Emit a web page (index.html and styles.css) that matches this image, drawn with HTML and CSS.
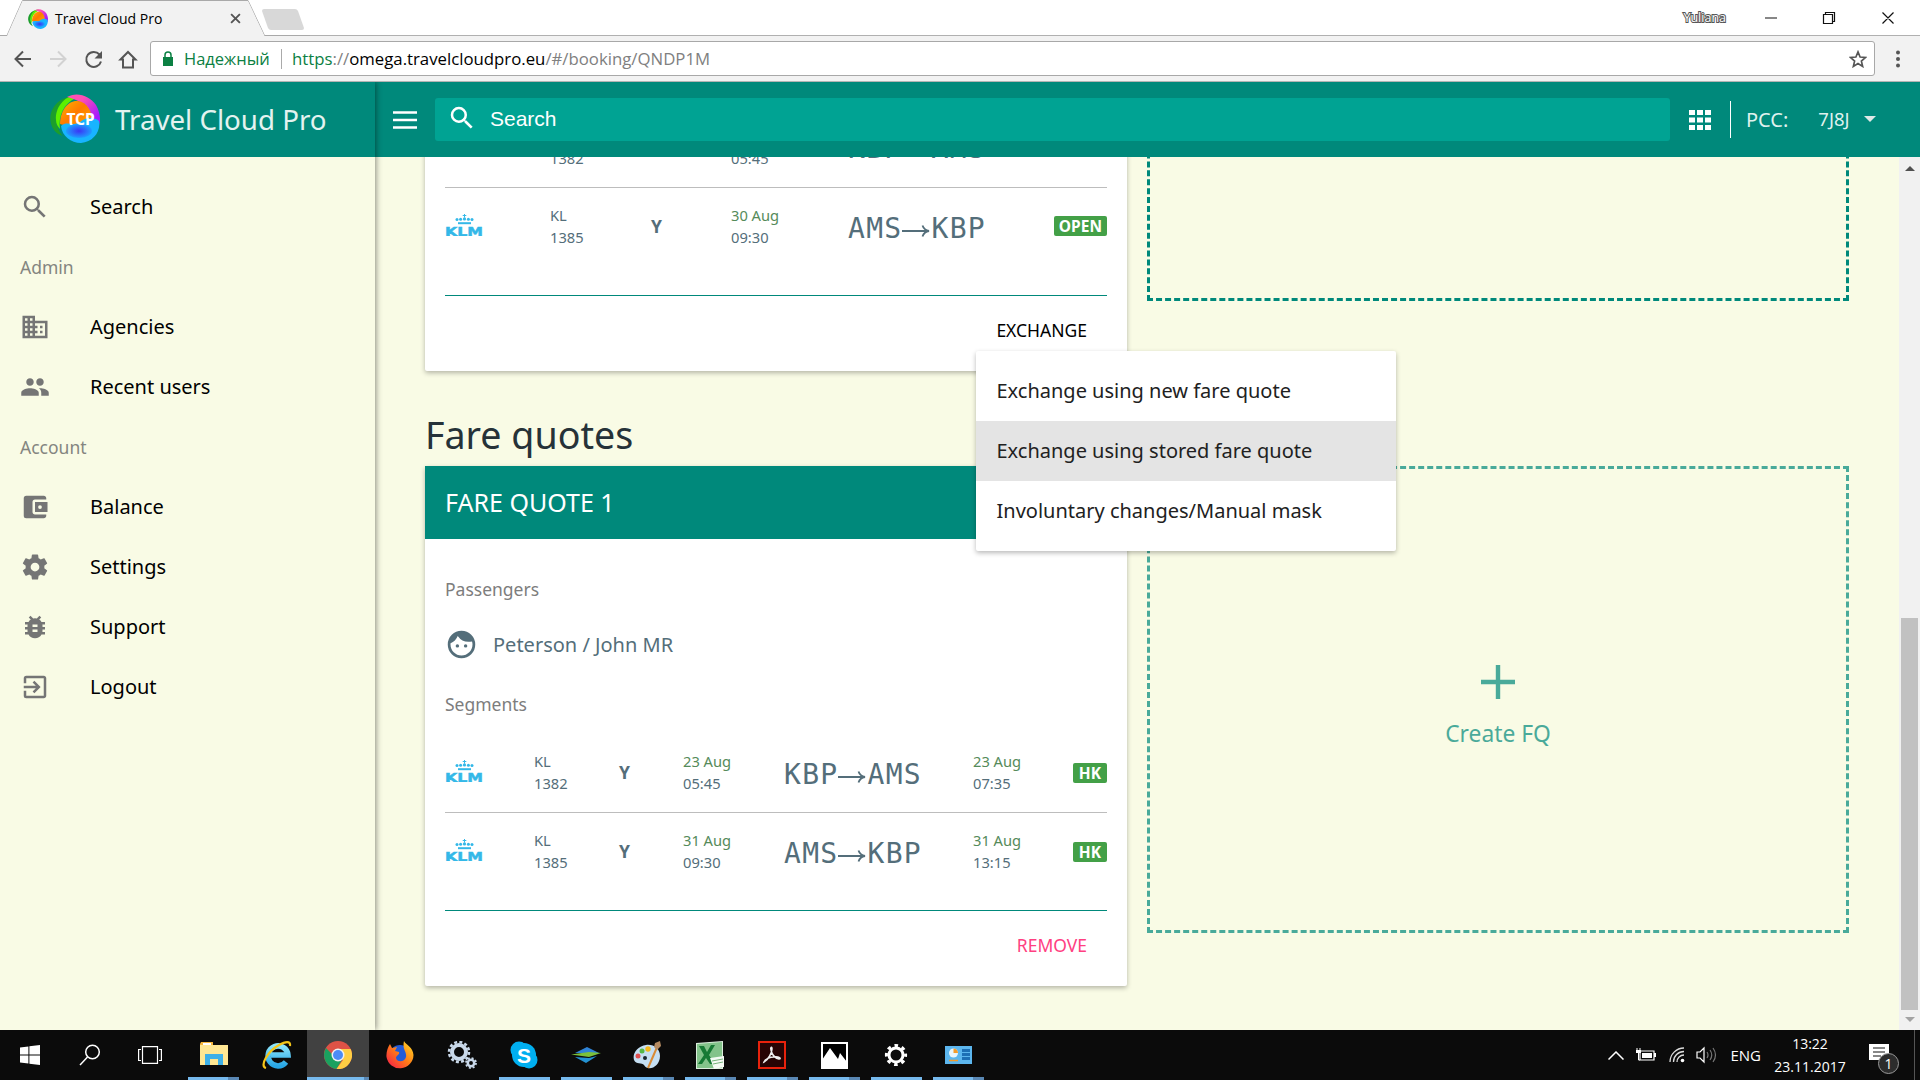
FILE: index.html
```html
<!DOCTYPE html>
<html lang="en">
<head>
<meta charset="utf-8">
<title>Travel Cloud Pro</title>
<link rel="stylesheet" href="styles.css">
</head>
<body>
<svg class="defs" aria-hidden="true">
  <defs>
    <linearGradient id="g-pink" x1="0" y1="0" x2="1" y2="1"><stop offset=".3" stop-color="#ff4fb4"/><stop offset=".8" stop-color="#a31aff"/></linearGradient>
    <linearGradient id="g-orange" x1="0" y1="0" x2="1" y2="1"><stop offset="0" stop-color="#ffb300"/><stop offset=".45" stop-color="#ff7a00"/><stop offset="1" stop-color="#ffb300"/></linearGradient>
    <radialGradient id="g-blue"><stop offset="0" stop-color="#3b35f5"/><stop offset="1" stop-color="#1f9dff"/></radialGradient>
    <linearGradient id="g-ie" x1="0" y1="0" x2="0" y2="1"><stop offset="0" stop-color="#8be4fb"/><stop offset="1" stop-color="#28a7e6"/></linearGradient>
    <linearGradient id="g-fox" x1="1" y1="0" x2="0" y2="1"><stop offset="0" stop-color="#ffe226"/><stop offset=".5" stop-color="#ff7a18"/><stop offset="1" stop-color="#f5134e"/></linearGradient>
    <symbol id="globe" viewBox="0 0 50 49" preserveAspectRatio="none">
      <path d="M20 3C8 4-1 16 .5 27c1 8 6 13 12 15C4 32 4 14 20 5z" fill="#1c9e2c"/>
      <path d="M26 1C14 2 5 14 6 26c0 4 2 7 4 9C8 22 14 9 26 4z" fill="#5df000"/>
      <path d="M17 3C27-3 40 2 46 11c4 7 5 15 3 20-2 4-8 2-9 0C42 20 36 7 17 3z" fill="url(#g-pink)"/>
      <path d="M10 30C10 17 18 6 28 7c9 1 14 10 14 20L30 36z" fill="url(#g-orange)"/>
      <path d="M11 32c6-6 12 1 19-4 5-4 13-6 19-1 2 11-6 21-18 22-10 0-19-7-20-17z" fill="#18b4ff"/>
      <ellipse cx="29" cy="37" rx="13" ry="7" fill="url(#g-blue)"/>
    </symbol>
    <symbol id="search" viewBox="0 0 24 24"><path d="M15.5 14h-.79l-.28-.27A6.47 6.47 0 0 0 16 9.5 6.5 6.5 0 1 0 9.5 16c1.61 0 3.09-.59 4.23-1.57l.27.28v.79l5 4.99L20.49 19zm-6 0a4.5 4.5 0 1 1 0-9 4.5 4.5 0 0 1 0 9z"/></symbol>
    <symbol id="klm" viewBox="0 0 38 22">
      <path d="M13 8.200h13v2H13z"/><circle cx="12" cy="5.400" r="1.500"/><circle cx="15.600" cy="5.200" r="1.500"/><circle cx="19.500" cy="4.900" r="1.600"/><circle cx="23.400" cy="5.200" r="1.500"/><circle cx="27" cy="5.400" r="1.500"/><path d="M19 0h1v1h1.300v1H20v1.500h-1V2h-1.300V1H19z"/>
      <text x="0" y="21.500" class="klm-word" textLength="38" lengthAdjust="spacingAndGlyphs">KLM</text>
    </symbol>
    <symbol id="arrow" viewBox="0 0 28 14"><path d="M0 7h27M20.500 1.500c1 3 3.500 5 6.500 5.500-3 .5-5.500 2.500-6.500 5.500" fill="none" stroke="#546e7a" stroke-width="1.800"/></symbol>
  </defs>
</svg>

<header class="browser">
  <div class="tabstrip">
    <svg class="tabs" width="310" height="36" viewBox="0 0 310 36"><path d="M0 35.500H7L22.500.500H248L264.500 35.500H310" fill="none" stroke="#a9a9a9"/><path d="M7 36 22.500 1H248L264.500 36z" fill="#f2f2f2"/><path d="M264 9h31q2 0 3 2l6 17q0 2-2 2h-31q-2 0-3-2l-6-17q0-2 2-2z" fill="#d8d8d8"/></svg>
    <div class="tab-label"><svg class="favicon"><use href="#globe"/></svg><span>Travel Cloud Pro</span>
      <svg class="tab-close" viewBox="0 0 10 10"><path d="M1 1l8 8M9 1 1 9" stroke="#555" stroke-width="1.700"/></svg></div>
    <span class="profile">Yuliana</span>
    <svg class="win-buttons" width="130" height="14" viewBox="0 0 130 14" fill="none" stroke="#111" stroke-width="1.200"><path d="M0 7h12M58.500 3.500h9v9h-9zM60.500 3V1.500h9v9H68M117.500 1.500l11 11M128.500 1.500l-11 11"/></svg>
  </div>
  <div class="toolbar">
    <svg class="nav" width="130" height="24" viewBox="0 0 130 24" fill="none" stroke="#555" stroke-width="2"><path d="M31 12H16M23 4.500 15.500 12l7.500 7.500"/><path d="M50 12h15M58 4.500l7.500 7.500-7.500 7.500" stroke="#d2d2d2"/><path d="M99.500 7.500A7.500 7.500 0 1 0 101 14.500"/><path d="M102 4v7.500h-7.500z" fill="#555" stroke="none"/><path d="M120.500 12.500 128 5l7.500 7.500H133V20.500H123V12.500z"/></svg>
    <div class="omnibox">
      <svg width="12" height="16" viewBox="0 0 12 16"><path d="M1 6h10v9H1z" fill="#0b8043"/><path d="M3 6V4a3 3 0 0 1 6 0v2" fill="none" stroke="#0b8043" stroke-width="1.500"/></svg>
      <span class="secure">Надежный</span>
      <span class="url"><b>https</b>://<i>omega.travelcloudpro.eu</i>/#/booking/QNDP1M</span>
      <svg class="star" width="18" height="18" viewBox="0 0 24 24"><path d="M12 2.500l2.800 6.800 7.200.600-5.500 4.800 1.700 7.200-6.200-3.900-6.200 3.900 1.700-7.200L2 9.900l7.200-.600z" fill="none" stroke="#555" stroke-width="2.200"/></svg>
    </div>
    <svg class="kebab" width="4" height="18" viewBox="0 0 4 18" fill="#555"><circle cx="2" cy="2.500" r="2"/><circle cx="2" cy="9" r="2"/><circle cx="2" cy="15.500" r="2"/></svg>
  </div>
</header>

<div class="app">
  <aside class="sidebar">
    <div class="brand"><svg class="logo" viewBox="0 0 50 49"><use href="#globe" width="50" height="49"/><text x="30.500" y="30.500" text-anchor="middle" class="logo-text">TCP</text></svg><span class="brand-name">Travel Cloud Pro</span></div>
    <nav class="menu">
      <a class="item"><svg class="ico"><use href="#search"/></svg><span>Search</span></a>
      <h6 class="group">Admin</h6>
      <a class="item"><svg class="ico" viewBox="0 0 24 24"><path d="M12 7V3H2v18h20V7H12zM6 19H4v-2h2v2zm0-4H4v-2h2v2zm0-4H4V9h2v2zm0-4H4V5h2v2zm4 12H8v-2h2v2zm0-4H8v-2h2v2zm0-4H8V9h2v2zm0-4H8V5h2v2zm10 12h-8v-2h2v-2h-2v-2h2v-2h-2V9h8v10zm-2-8h-2v2h2v-2zm0 4h-2v2h2v-2z"/></svg><span>Agencies</span></a>
      <a class="item"><svg class="ico" viewBox="0 0 24 24"><path d="M16 11c1.660 0 2.990-1.340 2.990-3S17.660 5 16 5s-3 1.340-3 3 1.340 3 3 3zm-8 0c1.660 0 2.990-1.340 2.990-3S9.660 5 8 5 5 6.340 5 8s1.340 3 3 3zm0 2c-2.330 0-7 1.170-7 3.500V19h14v-2.500c0-2.330-4.670-3.500-7-3.500zm8 0c-.290 0-.620.020-.970.050 1.160.840 1.970 1.970 1.970 3.450V19h6v-2.500c0-2.330-4.670-3.500-7-3.500z"/></svg><span>Recent users</span></a>
      <h6 class="group">Account</h6>
      <a class="item"><svg class="ico" viewBox="0 0 24 24"><path d="M21 18v1c0 1.100-.9 2-2 2H5a2 2 0 0 1-2-2V5a2 2 0 0 1 2-2h14c1.100 0 2 .9 2 2v1h-9a2 2 0 0 0-2 2v8c0 1.100.890 2 2 2h9zm-9-2h10V8H12v8zm4-2.500a1.500 1.500 0 1 1 0-3 1.500 1.500 0 0 1 0 3z"/></svg><span>Balance</span></a>
      <a class="item"><svg class="ico" viewBox="0 0 24 24"><path d="M19.430 12.980c.040-.320.070-.640.070-.980s-.030-.660-.070-.980l2.110-1.650c.190-.150.240-.420.120-.640l-2-3.460c-.120-.220-.390-.300-.610-.220l-2.490 1c-.520-.400-1.080-.730-1.690-.980l-.380-2.650C14.460 2.180 14.250 2 14 2h-4c-.250 0-.460.180-.490.420l-.380 2.650c-.610.250-1.170.590-1.690.980l-2.490-1c-.230-.090-.490 0-.610.220l-2 3.460c-.130.220-.070.490.120.640l2.110 1.650c-.040.320-.070.650-.070.980s.030.660.070.980l-2.110 1.650c-.190.150-.240.420-.120.640l2 3.460c.120.220.390.300.610.220l2.490-1c.520.400 1.080.730 1.690.980l.380 2.650c.030.240.240.420.490.420h4c.250 0 .460-.180.490-.420l.380-2.650c.610-.250 1.170-.590 1.690-.980l2.490 1c.230.090.490 0 .610-.220l2-3.460c.120-.220.070-.490-.120-.640l-2.110-1.650zM12 15.500a3.500 3.500 0 1 1 0-7 3.500 3.500 0 0 1 0 7z"/></svg><span>Settings</span></a>
      <a class="item"><svg class="ico" viewBox="0 0 24 24"><path d="M20 8h-2.810a5.985 5.985 0 0 0-1.820-1.960L17 4.410 15.590 3l-2.170 2.170a6.002 6.002 0 0 0-2.830 0L8.410 3 7 4.410l1.620 1.630C7.880 6.550 7.260 7.220 6.810 8H4v2h2.090c-.050.330-.090.660-.090 1v1H4v2h2v1c0 .340.040.670.090 1H4v2h2.810a5.990 5.990 0 0 0 10.380 0H20v-2h-2.090c.050-.330.090-.660.090-1v-1h2v-2h-2v-1c0-.340-.040-.670-.090-1H20V8zm-6 8h-4v-2h4v2zm0-4h-4v-2h4v2z"/></svg><span>Support</span></a>
      <a class="item"><svg class="ico" viewBox="0 0 24 24"><path d="M10.090 15.590L11.500 17l5-5-5-5-1.410 1.410L12.670 11H3v2h9.670l-2.580 2.590zM19 3H5a2 2 0 0 0-2 2v4h2V5h14v14H5v-4H3v4a2 2 0 0 0 2 2h14c1.100 0 2-.9 2-2V5c0-1.100-.9-2-2-2z"/></svg><span>Logout</span></a>
    </nav>
  </aside>

  <div class="content">
    <div class="topbar">
      <svg class="burger" width="24" height="18" viewBox="0 0 24 18"><path d="M0 1.500h24M0 9h24M0 16.500h24" stroke="#fff" stroke-width="2.600"/></svg>
      <div class="searchbox"><svg class="ico-w"><use href="#search"/></svg><span>Search</span></div>
      <svg class="apps" width="22" height="20" viewBox="0 0 22 20" fill="#fff"><path d="M0 0h6v5H0zM8 0h6v5H8zM16 0h6v5h-6zM0 7.500h6v5H0zM8 7.500h6v5H8zM16 7.500h6v5h-6zM0 15h6v5H0zM8 15h6v5H8zM16 15h6v5h-6z"/></svg>
      <div class="pcc"><span>PCC:</span><span class="code">7J8J</span><i class="caret"></i></div>
    </div>
    <div class="viewport">
      <main class="page">
        <section class="row tickets">
          <div class="card">
            <div class="segment wide">
              <svg class="klm"><use href="#klm"/></svg><div class="pair">KL<br>1382</div><b class="cls">Y</b><div class="pair"><em>23 Aug</em><br>05:45</div><div class="route">KBP<svg class="arrow"><use href="#arrow"/></svg>AMS</div><span class="badge">OPEN</span>
            </div>
            <div class="segment wide last">
              <svg class="klm"><use href="#klm"/></svg><div class="pair">KL<br>1385</div><b class="cls">Y</b><div class="pair"><em>30 Aug</em><br>09:30</div><div class="route">AMS<svg class="arrow"><use href="#arrow"/></svg>KBP</div><span class="badge">OPEN</span>
            </div>
            <div class="actions"><span class="exchange">EXCHANGE</span></div>
            <ul class="dropdown"><li>Exchange using new fare quote</li><li class="hover">Exchange using stored fare quote</li><li>Involuntary changes/Manual mask</li></ul>
          </div>
          <div class="dropzone"></div>
        </section>
        <h2 class="heading">Fare quotes</h2>
        <section class="row quotes">
          <div class="card">
            <div class="card-head">FARE QUOTE 1</div>
            <div class="label">Passengers</div>
            <div class="passenger"><svg viewBox="0 0 24 24"><path d="M9 11.750a1.250 1.250 0 1 0 0 2.500 1.250 1.250 0 0 0 0-2.500zm6 0a1.250 1.250 0 1 0 0 2.500 1.250 1.250 0 0 0 0-2.500zM12 2a10 10 0 1 0 0 20 10 10 0 0 0 0-20zm0 18c-4.410 0-8-3.590-8-8 0-.290.020-.580.050-.860 2.360-1.050 4.230-2.980 5.210-5.370a9.974 9.974 0 0 0 10.410 3.970c.210.710.330 1.470.330 2.260 0 4.410-3.590 8-8 8z"/></svg><span>Peterson / John MR</span></div>
            <div class="label seg">Segments</div>
            <div class="segment">
              <svg class="klm"><use href="#klm"/></svg><div class="pair">KL<br>1382</div><b class="cls">Y</b><div class="pair"><em>23 Aug</em><br>05:45</div><div class="route">KBP<svg class="arrow"><use href="#arrow"/></svg>AMS</div><div class="pair"><em>23 Aug</em><br>07:35</div><span class="badge">HK</span>
            </div>
            <div class="segment last">
              <svg class="klm"><use href="#klm"/></svg><div class="pair">KL<br>1385</div><b class="cls">Y</b><div class="pair"><em>31 Aug</em><br>09:30</div><div class="route">AMS<svg class="arrow"><use href="#arrow"/></svg>KBP</div><div class="pair"><em>31 Aug</em><br>13:15</div><span class="badge">HK</span>
            </div>
            <div class="actions"><span class="remove">REMOVE</span></div>
          </div>
          <div class="dropzone create"><svg width="34" height="34" viewBox="0 0 34 34"><path d="M0 17h34M17 0v34" stroke="#00897b" stroke-width="4.400"/></svg><span>Create FQ</span></div>
        </section>
      </main>
      <div class="scrollbar"><i class="up"></i><i class="thumb"></i><i class="down"></i></div>
    </div>
  </div>
</div>

<footer class="taskbar">
  <div class="tasks">
    <div class="task start"><svg width="20" height="20" viewBox="0 0 20 20" fill="#fff"><path d="M0 2.600 8.400 1.500V9.500H0zM9.400 1.300 20 0V9.500H9.400zM0 10.500h8.400v8L0 17.400zM9.400 10.500H20V20L9.400 18.700z"/></svg></div>
    <div class="task find"><svg width="22" height="22" viewBox="0 0 22 22" fill="none" stroke="#fff" stroke-width="1.500"><circle cx="13.500" cy="8" r="6.800"/><path d="M8.500 13 1 21"/></svg></div>
    <div class="task view"><svg width="24" height="18" viewBox="0 0 24 18" fill="none" stroke="#fff" stroke-width="1.200"><path d="M4.500.600h15v16.800h-15zM3 3.500H.600v11H3M21 3.500h2.400v11H21"/></svg></div>
    <div class="task on many"><svg width="28" height="26" viewBox="0 0 28 26"><path d="M0 2h3V0h10v3h15v20H0z" fill="#ffe793"/><path d="M1 0h12v3H0V2z" fill="#f6b73c"/><path d="M3 1h8v2H3z" fill="#fff"/><path d="M5 12h18v11h-5v-6h-8v6H5z" fill="#3eb0e8"/></svg></div>
    <div class="task ie"><svg width="30" height="30" viewBox="0 0 30 30" fill="none"><path d="M24 22a10 10 0 1 1 2-7H9" stroke="url(#g-ie)" stroke-width="5.500"/><path d="M4 28C-3 26 6 11 17 5c6-3.500 12-4.500 11 1" stroke="#f5c518" stroke-width="2.200"/></svg></div>
    <div class="task on active"><svg width="28" height="28" viewBox="0 0 28 28"><circle cx="14" cy="14" r="14" fill="#de5246"/><path d="M2 7a14 14 0 0 0 10.500 21L19 17 14 14H9z" fill="#1aa15f"/><path d="M14 8h12.600A14 14 0 0 1 12.500 28l6.500-9z" fill="#ffce44"/><circle cx="14" cy="14" r="6.500" fill="#f1f1f1"/><circle cx="14" cy="14" r="5" fill="#4c8bf5"/></svg></div>
    <div class="task fox"><svg width="28" height="28" viewBox="0 0 28 28"><circle cx="14" cy="15" r="11" fill="#235bd8"/><path d="M18 0c2 4 9 6 9.500 14A13.600 13.600 0 0 1 .500 16C0 11 2 6 4 3l2 4 5-1-2 4 4 1c1 3-3 3-3 6 1 5 9 4 10-1 1-6-4-7-2-16z" fill="url(#g-fox)"/></svg></div>
    <div class="task gears"><svg width="30" height="28" viewBox="0 0 30 28" fill="none" stroke="#c9d9ea"><circle cx="12" cy="11" r="7" stroke-width="4"/><circle cx="12" cy="11" r="10" stroke-width="2.500" stroke-dasharray="3 2.240"/><circle cx="24" cy="22" r="3.200" stroke-width="2.500"/><circle cx="24" cy="22" r="5" stroke-width="1.800" stroke-dasharray="2 1.930"/></svg></div>
    <div class="task on"><svg width="28" height="28" viewBox="0 0 28 28"><circle cx="9" cy="9" r="8.500" fill="#00aff0"/><circle cx="19" cy="19" r="8.500" fill="#00aff0"/><circle cx="14" cy="14" r="12" fill="#00aff0"/><text x="14" y="21.500" text-anchor="middle" class="skype">S</text></svg></div>
    <div class="task on"><svg width="30" height="16" viewBox="0 0 30 16"><path d="M4 6 16 0l12 6z" fill="#2f83d6"/><path d="M0 7.500 18 5l12 1-12 4z" fill="#7cc13a"/><path d="M4 10l14 1 8-2-11 7z" fill="#2391d2"/></svg></div>
    <div class="task on many"><svg width="30" height="28" viewBox="0 0 30 28"><path d="M13 4C5 5-1 12 1 19c2 5 8 2 10 5 4 7 16 2 16-9C27 8 21 3 13 4z" fill="#c5dff3"/><circle cx="5" cy="15" r="2.500" fill="#e04f4f"/><circle cx="9" cy="10" r="2.500" fill="#55b848"/><circle cx="15" cy="8" r="2.700" fill="#f5b81c"/><circle cx="12" cy="17" r="2" fill="#182630"/><path d="M25 4 15 27" stroke="#d98b36" stroke-width="2"/><path d="M22 2l5-2 1 5-4 4-3-3z" fill="#b58b62"/></svg></div>
    <div class="task on many"><svg width="28" height="28" viewBox="0 0 28 28"><path d="M0 2 27 0v28H0z" fill="#dceedd"/><path d="M1 3l25-2v26H1z" fill="#83c38a"/><path d="M3 5h5l3 6 4-7h4l-6 10 6 9h-5l-4-6-4 6H2l6-9z" fill="#177a35"/><path d="M14 17l14-2v11l-10 2z" fill="#f4fbf4"/><path d="M16 20l11-2M17 23l10-2" stroke="#76b47c"/></svg></div>
    <div class="task on many"><svg width="28" height="28" viewBox="0 0 28 28"><path d="M1 1h26v26H1z" fill="#260404" stroke="#e8220c" stroke-width="2"/><path d="M6 21c4-2 8-9 8-13 0-3-2-2-1 1 1 5 4 8 8 9 3 0 0-3-5-2-4 0-9 2-10 5z" fill="none" stroke="#eee" stroke-width="1.500"/></svg></div>
    <div class="task on many"><svg width="27" height="27" viewBox="0 0 27 27"><path d="M1 1h25v25H1z" fill="#000" stroke="#fff" stroke-width="2"/><path d="M1 18 9 6l8 11 2-6 7 9v6H1z" fill="#fff"/></svg></div>
    <div class="task on"><svg width="24" height="24" viewBox="0 0 24 24" fill="none" stroke="#fff"><circle cx="12" cy="12" r="7" stroke-width="3"/><circle cx="12" cy="12" r="9.600" stroke-width="3" stroke-dasharray="3.600 3.940" stroke-dashoffset="1.800"/></svg></div>
    <div class="task on many"><svg width="27" height="18" viewBox="0 0 27 18"><path d="M0 0h27v18H0z" fill="#5cb6ee"/><circle cx="8.500" cy="7" r="4.500" fill="#e8f5fd"/><path d="M8.500 7V2.500A4.500 4.500 0 0 1 13 7z" fill="#f49b2a"/><path d="M17 3h8v3h-8zM17 7h8v3h-8zM17 11h8v3h-8z" fill="#1d6fb5"/><path d="M4 14.500h9" stroke="#f49b2a" stroke-width="1.500"/></svg></div>
  </div>
  <div class="tray">
    <svg width="16" height="9" viewBox="0 0 16 9"><path d="M.500 8.500 8 1l7.500 7.500" fill="none" stroke="#fff" stroke-width="1.500"/></svg>
    <svg class="battery" width="20" height="14" viewBox="0 0 20 14"><path d="M4 3h14v9H4z" fill="none" stroke="#fff" stroke-width="1.200"/><path d="M6 5h10v5H6zM18 5h2v4h-2zM0 2h5v3H0z" fill="#fff"/><path d="M1 0v2M4 0v2M2.500 5v7H4" stroke="#fff" fill="none"/></svg>
    <svg class="wifi" width="16" height="16" viewBox="0 0 16 16" fill="none" stroke="#ddd" stroke-width="1.300"><path d="M1 15A14 14 0 0 1 15 1M4.500 15A10.500 10.500 0 0 1 15 4.500M8 15a7 7 0 0 1 7-7"/><circle cx="13.500" cy="13.500" r="1.800" fill="#fff" stroke="none"/></svg>
    <svg class="sound" width="21" height="18" viewBox="0 0 21 18" fill="none" stroke="#fff" stroke-width="1.200"><path d="M1 6h3l4-4v14l-4-4H1z"/><path d="M11 6q2 3 0 6M14 4q3.500 5 0 10M17 2q5 7 0 14" stroke="#777"/></svg>
    <span class="lang">ENG</span>
    <div class="clock">13:22<br>23.11.2017</div>
    <div class="notify"><svg width="20" height="20" viewBox="0 0 20 20"><path d="M0 0h20v16h-7l-3 4v-4H0z" fill="#fff"/><path d="M4 4h12M4 8h12M4 12h8" stroke="#111" stroke-width="1.200"/></svg><span class="count">1</span></div>
    <i class="show-desktop"></i>
  </div>
</footer>
</body>
</html>
```
FILE: styles.css
```css
* { box-sizing: border-box; }
body { margin: 0; width: 1920px; height: 1080px; overflow: hidden; display: flex; flex-direction: column; font-family: "Noto Sans", sans-serif; background: #f9fbe5; color: #000; }
svg { display: block; flex: none; }
.defs { position: absolute; width: 0; height: 0; }

/* browser chrome */
.browser { height: 82px; flex: none; background: #f2f2f2; border-bottom: 1px solid #b4b4b4; font-family: "Open Sans", "Noto Sans", sans-serif; }
.tabstrip { height: 36px; display: flex; align-items: center; background: #fff; border-bottom: 1px solid #b0b0b0; position: relative; }
.tabs { position: absolute; left: 0; top: 0; }
.tab-label { position: relative; display: flex; align-items: center; width: 213px; margin-left: 28px; padding-top: 2px; font-size: 14px; }
.tab-label span { margin-left: 7px; flex: 1; }
.favicon { width: 20px; height: 20px; }
.tab-close { width: 11px; height: 11px; }
.profile { margin-left: auto; margin-right: 39px; font-size: 12.5px; line-height: 16px; color: #fff; -webkit-text-stroke: 2px #555; paint-order: stroke fill; }
.win-buttons { margin-right: 25px; }
.toolbar { height: 45px; display: flex; align-items: center; }
.nav { width: 130px; overflow: visible; }
.omnibox { width: 1725px; height: 35px; margin-left: 20px; display: flex; align-items: center; padding: 0 7px 0 11px; background: #fff; border: 1px solid #a8a8a8; border-radius: 3px; font-size: 16.780px; }
.secure { width: 98px; margin-left: 10px; border-right: 1px solid #aaa; line-height: 20px; font-size: 16.500px; color: #0b8043; }
.url { margin-left: 10px; color: #808080; }
.url b { font-weight: 400; color: #0b8043; }
.url i { font-style: normal; color: #000; }
.star { margin-left: auto; }
.kebab { margin-left: 21px; }

/* application shell */
.app { height: 948px; flex: none; display: flex; }
.sidebar { width: 375px; flex: none; z-index: 2; background: #f9fbe5; box-shadow: 1px 0 6px rgba(0,0,0,.45); clip-path: inset(0 -12px 0 0); }
.brand { height: 75px; display: flex; align-items: center; padding-left: 50px; background: #00897b; }
.logo { width: 50px; height: 49px; margin-top: -3px; }
.logo-text { font: 700 15.500px "Noto Sans", sans-serif; fill: #fff; }
.brand-name { margin-left: 15px; padding-bottom: 1px; font-size: 27.700px; color: #e3f3f0; }
.menu { padding-top: 20px; }
.item { height: 60px; display: flex; align-items: center; padding-left: 20px; font-size: 20px; }
.ico { width: 30px; height: 30px; fill: #757575; }
.item span { margin-left: 40px; padding-bottom: 2px; }
.group { margin: 0; height: 60px; line-height: 60px; padding-left: 20px; font-size: 17.500px; font-weight: 400; color: #848580; }
.content { flex: 1; display: flex; flex-direction: column; }
.topbar { height: 75px; flex: none; display: flex; align-items: center; padding-left: 18px; background: #00897b; color: #dff1ee; }
.searchbox { width: 1235px; height: 43px; margin-left: 18px; padding-left: 12px; display: flex; align-items: center; background: #00a393; border-radius: 3px; color: #fff; font: 21px "Liberation Sans", sans-serif; }
.ico-w { width: 30px; height: 30px; fill: #fff; margin-top: -4px; }
.searchbox span { margin-left: 13px; padding-bottom: 2px; }
.apps { margin-left: 19px; }
.pcc { display: flex; align-items: center; height: 37px; margin-left: 19px; padding-left: 15px; border-left: 1px solid #fff; font-size: 20px; }
.pcc .code { margin-left: 30px; font-size: 18.500px; padding-bottom: 3px; }
.caret { margin-left: 14px; margin-top: -2px; border: 6px solid transparent; border-top-color: #dfe9e7; border-bottom: 0; }
.viewport { flex: 1; min-height: 0; display: flex; overflow: hidden; }
.page { flex: 1; padding-left: 50px; }
.row { display: flex; gap: 20px; }
.tickets { margin-top: -49px; height: 263px; }
.card { position: relative; width: 702px; padding: 0 20px; background: #fff; border-radius: 2px; box-shadow: 0 2px 5px rgba(0,0,0,.28); }
.segment { height: 79px; display: grid; grid-template-columns: 89px 85px 64px 101px 189px 1fr auto; align-items: center; border-bottom: 1px solid #bdbdbd; color: #546e7a; }
.segment.wide { grid-template-columns: 105px 101px 80px 117px 1fr auto; height: 80px; }
.segment.last { height: 98px; padding-bottom: 19px; border-color: #00897b; }
.segment.wide.last { height: 108px; padding-bottom: 29px; }
.klm { width: 38px; height: 22px; fill: #33b8e8; margin-top: -5px; }
.klm-word { font: 700 13px "DejaVu Sans", sans-serif; stroke: #33b8e8; stroke-width: .5px; }
.pair { font-size: 14.700px; line-height: 22px; padding-bottom: 2px; }
.pair em { font-style: normal; color: #558b5a; }
.cls { font-size: 17.500px; padding-bottom: 2px; }
.route { display: flex; align-items: center; height: 40px; padding-top: 2px; font-family: "DejaVu Sans Mono", monospace; font-size: 28px; letter-spacing: 1.300px; }
.arrow { width: 28px; height: 14px; margin-top: 5px; margin-right: 1px; }
.badge { height: 20px; margin-bottom: 3px; padding: 0 5px; line-height: 20px; border-radius: 2px; background: #43a047; color: #fff; font-size: 15.500px; font-weight: 700; }
.quotes .badge { padding: 0 6px; margin-bottom: 1px; }
.actions { height: 68px; display: flex; align-items: center; justify-content: flex-end; padding-right: 20px; font-size: 17.500px; }
.remove { color: #ff4081; }
.dropdown { position: absolute; z-index: 3; left: 551px; top: 243px; width: 420px; margin: 0; padding: 10px 0; list-style: none; background: #fff; border-radius: 2px; box-shadow: 0 2px 5px rgba(0,0,0,.28); font-size: 20px; color: #212121; }
.dropdown li { height: 60px; line-height: 59px; padding-left: 20.500px; }
.dropdown .hover { background: #e4e4e4; }
.dropzone { width: 702px; height: 193px; border: 3px dashed #00897b; }
.heading { margin: 0; height: 95px; padding-top: 38px; font-size: 37.600px; line-height: 52px; font-weight: 400; color: #263238; }
.quotes { height: 520px; }
.card-head { height: 73px; margin: 0 -20px; padding-left: 20px; line-height: 73px; background: #00897b; color: #fff; font-size: 25px; }
.label { margin-top: 34px; line-height: 32px; font-size: 17.500px; color: #7d7d7d; }
.passenger { height: 78px; display: flex; align-items: center; font-size: 20px; color: #546e7a; }
.passenger svg { width: 33px; height: 33px; fill: #546e7a; }
.passenger span { margin-left: 15px; }
.label.seg { margin-top: 5px; }
.label.seg + .segment { margin-top: 14px; }
.create { height: 467px; opacity: .7; display: flex; flex-direction: column; align-items: center; padding-top: 196px; font-size: 22.800px; color: #00897b; }
.create span { margin-top: 18px; line-height: 34px; }
.scrollbar { width: 21px; display: flex; flex-direction: column; align-items: center; background: #f1f1f1; }
.scrollbar .up { margin-top: 9px; border: 5px solid transparent; border-bottom-color: #505050; border-top: 0; }
.scrollbar .thumb { margin-top: 447px; width: 17px; height: 392px; background: #c1c1c1; }
.scrollbar .down { margin-top: 7px; border: 5px solid transparent; border-top-color: #a3a3a3; border-bottom: 0; }

/* desktop taskbar */
.taskbar { height: 50px; flex: none; display: flex; justify-content: space-between; background: #0b0b0b; color: #fff; font-family: "Open Sans", "Noto Sans", sans-serif; }
.tasks { display: grid; grid-template-columns: 60px 60px 60px 67px 60px 62px 62px 62px repeat(8, 62px); width: 1000px; }
.task { display: flex; align-items: center; justify-content: center; }
.on { background: linear-gradient(#76b9ed, #76b9ed) 50% 100% / 51px 3px no-repeat; }
.many { background-image: linear-gradient(90deg, #76b9ed 40px, #5a88b4 40px); }
.active { background-color: #414141; background-size: 100% 3px; background-image: linear-gradient(90deg, #76b9ed 57px, #5a88b4 57px); }
.skype { font: 700 21px "Liberation Sans", sans-serif; fill: #fff; }
.tray { display: flex; align-items: center; font-size: 15px; }
.battery { margin-left: 12px; }
.wifi { margin-left: 13px; }
.sound { margin-left: 11px; }
.lang { margin-left: 13px; margin-right: 2px; }
.clock { width: 100px; margin-left: -3px; text-align: center; line-height: 23px; font-size: 14px; }
.notify { position: relative; margin-left: 9px; margin-top: -2px; }
.count { position: absolute; left: 9px; top: 9px; width: 21px; height: 21px; border: 1px solid #999; border-radius: 50%; background: #2c2c2c; text-align: center; line-height: 19px; font-size: 14px; }
.show-desktop { width: 1px; height: 50px; margin: 0 5px 0 25px; background: #555; }
```
